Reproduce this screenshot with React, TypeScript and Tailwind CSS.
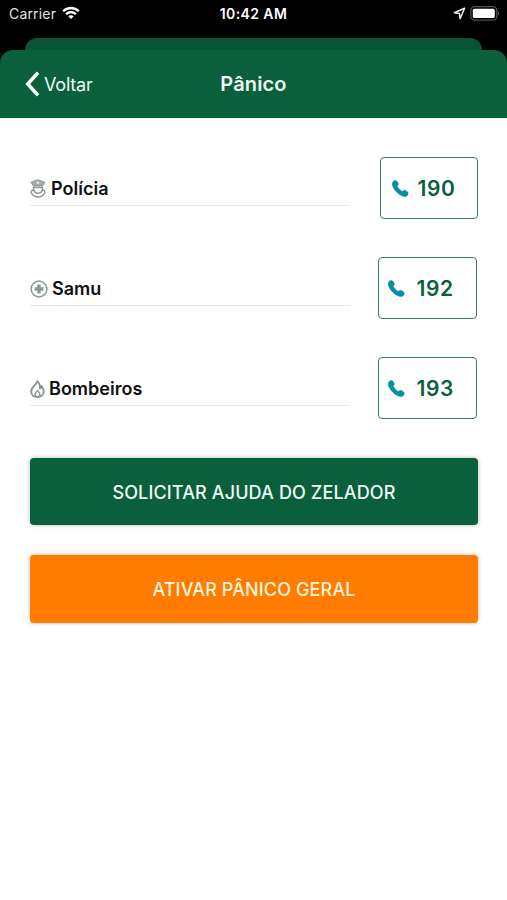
import type { ReactNode } from "react";

function PoliceIcon() {
  return (
    <svg width="16" height="19" viewBox="0 0 16 19" fill="none" stroke="#8b9794" strokeWidth="1.500">
      <path d="M8 .8 15 3.200 12.800 6.600H3.200L1 3.200Z" fill="#a3adab" strokeLinejoin="round" strokeWidth="1" />
      <path d="M8 2.400v2.800M6.600 3.800h2.800" stroke="#fff" strokeWidth=".9" />
      <path d="M2.800 8.300h10.400" strokeWidth="1.700" />
      <path d="M3.500 9c0 2.800 1.400 5.200 4.500 5.200s4.500-2.400 4.500-5.200" />
      <path d="M3.300 11c-1.800.5-2.500 1.700-1.900 3C2.500 16.200 5.600 18 8 18s5.500-1.800 6.600-4c.6-1.300-.1-2.500-1.900-3" strokeLinejoin="round" />
    </svg>
  );
}

function MedicIcon() {
  return (
    <svg width="18" height="18" viewBox="0 0 18 18" fill="none" stroke="#8b9794">
      <circle cx="9" cy="9" r="7.900" strokeWidth="1.500" />
      <path d="M9 4.600v8.800M4.600 9h8.800" strokeWidth="3.400" />
    </svg>
  );
}

function FireIcon() {
  return (
    <svg width="15" height="18" viewBox="0 0 15 18" fill="none" stroke="#8b9794" strokeWidth="1.900" strokeLinejoin="round">
      <path d="M7.200 1.200C6.500 4.800 1.200 7 1.200 11.400c0 3.300 2.600 5.600 6.200 5.600s6.300-2.300 6.300-5.600c0-2.300-.8-4-2-5.300-.3 1.300-.8 2-1.600 2.400.1-3.100-.7-5.900-2.900-7.300Z" />
      <path d="M7.500 10.300c-.4 1.500-2.400 2.200-2.400 4.200 0 1.500.9 2.300 2.400 2.300s2.500-.8 2.500-2.300c0-2-2-2.700-2.500-4.200Z" strokeWidth="1.300" />
    </svg>
  );
}

function PhoneIcon({ className }: { className: string }) {
  return (
    <svg width="17" height="17" viewBox="0 0 17 17" className={className} fill="currentColor" stroke="currentColor" strokeWidth=".5">
      <path d="M1 1.700C2 .5 3.900.1 4.900 1.300l1 1.500c.6.900.5 1.900-.2 2.700-.5.600-.5 1 0 1.700 1 1.500 2.200 2.700 3.700 3.700.7.500 1.100.5 1.700 0 .8-.7 1.800-.8 2.700-.2l1.600 1.100c1.200 1 .9 2.900-.3 3.900-1.200 1.100-2.900 1.100-4.600.4C6.300 14.400 2.300 10.500.7 6.300.1 4.600-.1 2.900 1 1.700Z" />
    </svg>
  );
}

type Contact = {
  name: string;
  number: string;
  icon: ReactNode;
  labelClass: string;
  buttonClass: string;
};

const contacts: Contact[] = [
  {
    name: "Polícia",
    number: "190",
    icon: <PoliceIcon />,
    labelClass: "gap-[5px]",
    buttonClass: "mr-[29px] gap-[9px] pl-[11px]",
  },
  {
    name: "Samu",
    number: "192",
    icon: <MedicIcon />,
    labelClass: "gap-[4px]",
    buttonClass: "mr-[30.5px] gap-[12px] pl-[8.5px]",
  },
  {
    name: "Bombeiros",
    number: "193",
    icon: <FireIcon />,
    labelClass: "gap-[4px]",
    buttonClass: "mr-[30.5px] gap-[12px] pl-[8.5px]",
  },
];

function StatusBar() {
  return (
    <div className="grid h-[38px] grid-cols-3 items-start px-[8px] text-white">
      <div className="flex items-center gap-[6px] pt-[4px] pl-px">
        <span className="text-[14px] leading-5 tracking-[0.18px] text-[#e4e4e4]">Carrier</span>
        <svg width="18" height="14" viewBox="0 0 19 15" className="-mt-[2px]" fill="none" stroke="#fff" strokeWidth="2.500">
          <path d="M1.100 5.600C5.800 1 13.200 1 17.900 5.600" />
          <path d="M4.200 8.800c3-2.900 7.600-2.900 10.600 0" />
          <path d="m9.500 14-2.900-3c1.600-1.500 4.200-1.500 5.800 0Z" fill="#fff" stroke="none" />
        </svg>
      </div>
      <span className="pt-[4px] text-center text-[14px] leading-5 font-semibold tracking-[0.4px]">10:42 AM</span>
      <div className="flex items-center justify-end gap-[4px] pt-[6px]">
        <svg width="13" height="13" viewBox="0 0 13 13" fill="none" stroke="#e8e8e8" strokeWidth="1.500" strokeLinejoin="round">
          <path d="M11.600 1.200 1.300 5.700l5.100.7.700 5.200Z" />
        </svg>
        <svg width="30" height="15" viewBox="0 0 30 15" className="-mr-px">
          <rect x=".8" y=".7" width="26" height="13.400" rx="3.800" fill="none" stroke="#505050" strokeWidth="1.300" />
          <rect x="2.800" y="2.700" width="22" height="9.400" rx="1.600" fill="#fff" />
          <path d="M28 5.200c1.600.7 1.600 3.700 0 4.400Z" fill="#5c5c5c" />
        </svg>
      </div>
    </div>
  );
}

function Header() {
  return (
    <header className="grid h-[68px] grid-cols-3 items-center rounded-t-[13px] bg-[#0a5f3d] text-[#effaf5]">
      <button className="flex items-center gap-[4px] pl-[25px]">
        <svg width="15" height="26" viewBox="0 0 15 26" fill="none" stroke="#fff" strokeWidth="3.600">
          <path d="M13 1.600 2.800 13 13 24.400" />
        </svg>
        <span className="pt-[2px] text-[18px] leading-6 tracking-[-0.2px]">Voltar</span>
      </button>
      <h1 className="text-center text-[20px] leading-6 font-semibold tracking-[0.15px]">Pânico</h1>
    </header>
  );
}

function ContactRow({ contact }: { contact: Contact }) {
  return (
    <div className="flex h-[62px] items-start justify-between pl-[30px]">
      <div className={`flex h-[49px] w-[320px] items-center border-b border-[#e6e8e7] pt-[15px] ${contact.labelClass}`}>
        {contact.icon}
        <span className="pt-px text-[18px] leading-6 font-semibold tracking-[0.02px] text-[#111]">{contact.name}</span>
      </div>
      <button className={`flex h-[62px] w-[98.5px] items-center rounded-[4px] border-[1.5px] border-[#39805f] ${contact.buttonClass}`}>
        <PhoneIcon className="text-[#078da5]" />
        <span className="pt-[2px] text-[21px] leading-6 font-semibold tracking-[0.6px] text-[#0a5f3d]">{contact.number}</span>
      </button>
    </div>
  );
}

export default function App() {
  return (
    <div className="h-[900px] w-[507px] overflow-hidden bg-black font-['Inter','Liberation_Sans',sans-serif]">
      <StatusBar />
      {/* edge of the screen stacked behind the modal sheet */}
      <div className="mx-[25px] h-[25px] rounded-t-[12px] bg-[#095437]" />
      <div className="relative -mt-[13px]">
        <Header />
        <main className="h-[782px] bg-white pt-[39px]">
          <div className="flex flex-col gap-[38px]">
            {contacts.map((contact) => (
              <ContactRow key={contact.number} contact={contact} />
            ))}
          </div>
          <div className="mt-[39px] flex flex-col gap-[30px] pr-[29px] pl-[30px] text-[18px] leading-6 font-medium tracking-[0.13px]">
            <button className="h-[67px] rounded-[4px] bg-[#0a5f3d] pt-[2px] text-[#effaf5] shadow-[0_0_4px_rgba(0,0,0,0.3)]">
              SOLICITAR AJUDA DO ZELADOR
            </button>
            <button className="h-[68px] rounded-[4px] bg-[#ff7c00] pt-px text-[#fff3dc] shadow-[0_0_4px_rgba(0,0,0,0.3)]">
              ATIVAR PÂNICO GERAL
            </button>
          </div>
        </main>
      </div>
    </div>
  );
}
